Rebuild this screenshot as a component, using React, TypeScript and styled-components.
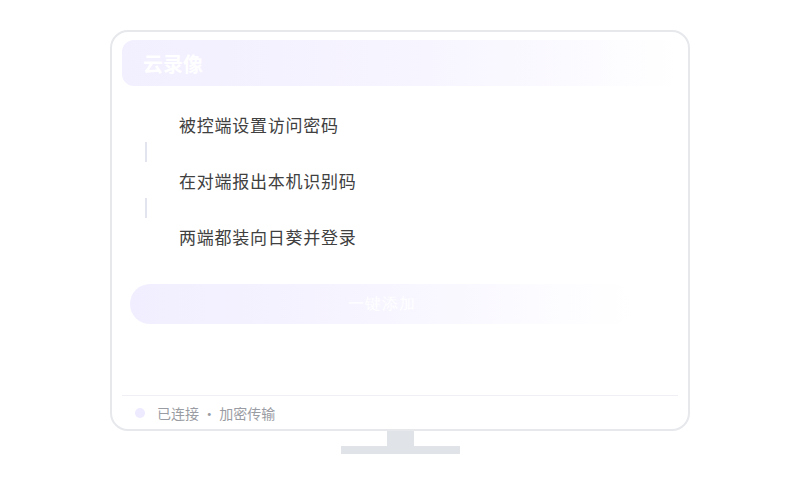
import React, { FC } from 'react'
import styled, { createGlobalStyle } from 'styled-components'

const GlobalStyle = createGlobalStyle`
  html, body {
    margin: 0;
    padding: 0;
    background: #ffffff;
    font-family: "Noto Sans CJK SC", "Noto Sans", sans-serif;
  }
`

const steps = ['被控端设置访问密码', '在对端报出本机识别码', '两端都装向日葵并登录']

const App: FC = () => {
  return (
    <>
      <GlobalStyle />
      <Page>
        <Monitor>
          <Header>云录像</Header>
          <StepList>
            {steps.map((s, i) => (
              <React.Fragment key={s}>
                {i > 0 && <Connector />}
                <StepRow>{s}</StepRow>
              </React.Fragment>
            ))}
          </StepList>
          <AddButton>一键添加</AddButton>
          <Spacer />
          <Footer>
            <Dot />
            <FooterText>已连接 · 加密传输</FooterText>
          </Footer>
        </Monitor>
        <Neck />
        <Base />
      </Page>
    </>
  )
}

export default App

const Page = styled.div`
  display: flex;
  flex-direction: column;
  align-items: center;
  padding-top: 30px;
  width: 800px;
  height: 500px;
  box-sizing: border-box;
`

const Monitor = styled.div`
  width: 580px;
  height: 401px;
  box-sizing: border-box;
  border: 2px solid #e6e8ec;
  border-radius: 18px;
  padding: 8px 10px 0;
  display: flex;
  flex-direction: column;
  background: #ffffff;
`

const Header = styled.div`
  height: 46px;
  border-radius: 12px;
  padding-left: 21px;
  display: flex;
  align-items: center;
  font-size: 20px;
  font-weight: 700;
  color: #ffffff;
  background: linear-gradient(90deg, #f2efff 0%, #f7f5ff 55%, #fcfbff 85%, rgba(255, 255, 255, 0) 100%);
`

const StepList = styled.div`
  display: flex;
  flex-direction: column;
  padding: 20px 0 0 23px;
`

const StepRow = styled.div`
  height: 36px;
  display: flex;
  align-items: center;
  padding-left: 34px;
  font-size: 17px;
  letter-spacing: 0.75px;
  color: #404040;
`

const Connector = styled.div`
  width: 2px;
  height: 20px;
  background: #e3e5ee;
`

const AddButton = styled.div`
  margin: 30px 0 0 8px;
  width: 504px;
  height: 40px;
  border-radius: 20px;
  display: flex;
  align-items: center;
  justify-content: center;
  font-family: serif;
  font-size: 16px;
  letter-spacing: 1px;
  color: #ffffff;
  background: linear-gradient(90deg, #f1eeff 0%, #f7f5ff 50%, #fcfbff 80%, rgba(255, 255, 255, 0) 100%);
`

const Spacer = styled.div`
  flex: 1;
`

const Footer = styled.div`
  height: 33px;
  border-top: 1px solid #eef0f3;
  display: flex;
  align-items: center;
  padding-left: 13px;
  gap: 12px;
`

const Dot = styled.div`
  width: 10px;
  height: 10px;
  border-radius: 50%;
  background: #eeeaff;
`

const FooterText = styled.div`
  font-size: 14px;
  color: #9a9ca3;
`

const Neck = styled.div`
  width: 27px;
  height: 15px;
  background: #e0e4e9;
`

const Base = styled.div`
  width: 119px;
  height: 8px;
  background: #e0e4e9;
`
